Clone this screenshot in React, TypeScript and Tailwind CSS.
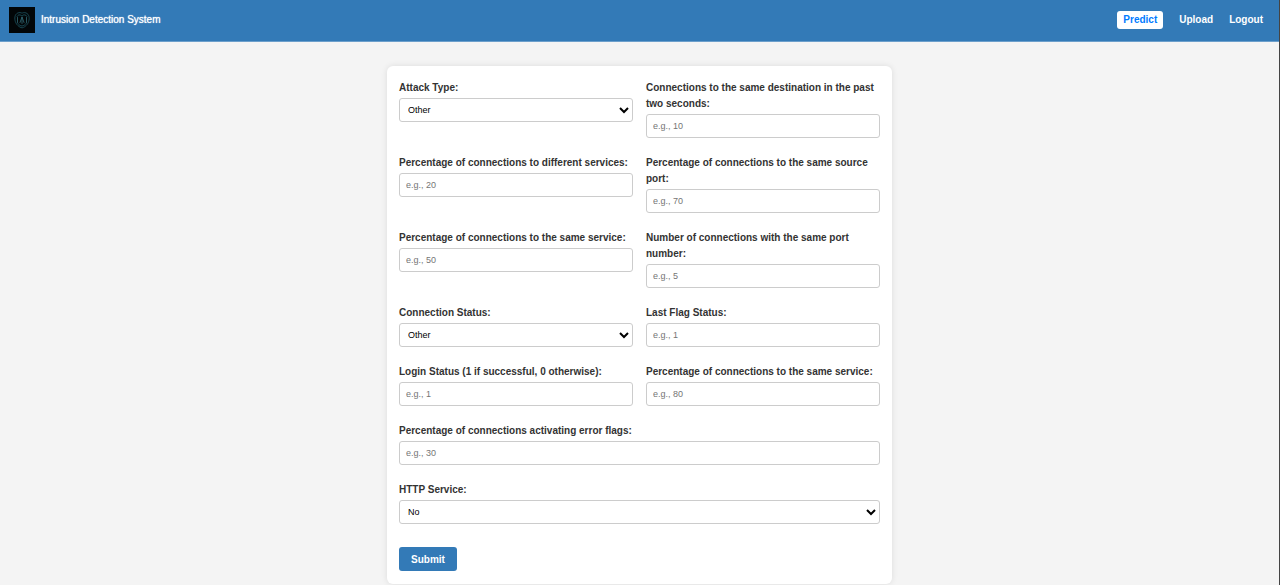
import { useId } from "react";

type FieldProps = {
  label: string;
  placeholder?: string;
  options?: string[];
  wide?: boolean;
};

const fields: FieldProps[] = [
  { label: "Attack Type:", options: ["Other", "neptune", "normal", "satan"] },
  { label: "Connections to the same destination in the past two seconds:", placeholder: "e.g., 10" },
  { label: "Percentage of connections to different services:", placeholder: "e.g., 20" },
  { label: "Percentage of connections to the same source port:", placeholder: "e.g., 70" },
  { label: "Percentage of connections to the same service:", placeholder: "e.g., 50" },
  { label: "Number of connections with the same port number:", placeholder: "e.g., 5" },
  { label: "Connection Status:", options: ["Other", "S0", "SF"] },
  { label: "Last Flag Status:", placeholder: "e.g., 1" },
  { label: "Login Status (1 if successful, 0 otherwise):", placeholder: "e.g., 1" },
  { label: "Percentage of connections to the same service:", placeholder: "e.g., 80" },
  { label: "Percentage of connections activating error flags:", placeholder: "e.g., 30", wide: true },
  { label: "HTTP Service:", options: ["No", "Yes"], wide: true },
];

function Field({ label, placeholder, options, wide }: FieldProps) {
  const id = useId();
  return (
    <div className={wide ? "col-span-2" : ""}>
      <label htmlFor={id} className="mb-0.5 block pt-px text-[10px] leading-4 font-bold text-[#333]">
        {label}
      </label>
      {options ? (
        <select
          id={id}
          className="block h-6 w-full rounded-[3px] border border-[#ccc] bg-white px-1 text-[9px] text-black"
        >
          {options.map((option) => (
            <option key={option}>{option}</option>
          ))}
        </select>
      ) : (
        <input
          id={id}
          type="text"
          placeholder={placeholder}
          className="block h-6 w-full rounded-[3px] border border-[#ccc] bg-white px-1.5 text-[9px] text-black placeholder:text-[#757575]"
        />
      )}
    </div>
  );
}

function Logo() {
  return (
    <svg viewBox="0 0 26 26" className="size-[26px]" aria-hidden="true">
      <rect width="26" height="26" fill="#020608" />
      <g fill="none" stroke="#2b7a8c" strokeWidth="0.8" strokeLinecap="round" opacity="0.7">
        <path d="M13 6.2C10 4.6 6.6 6.4 6 9.6c-.6 3.400.6 7 3 9 1.200 1.200 2.600 2 4 2.200 1.400-.2 2.800-1 4-2.200 2.400-2 3.600-5.600 3-9C19.400 6.400 16 4.600 13 6.200Z" strokeDasharray="1.600 .8" />
        <path d="M8 9.500c1.500-2.300 3.500-2 5-.5 1.500-1.500 3.500-1.800 5 .5" strokeDasharray="2 .7" />
        <path d="M8.500 10.500v5M11 15.500l2-5.500 2 5.500M13 10v6.500M17.500 10.500v5" stroke="#4796a5" />
        <path d="M9 16.500c1 1.500 2.400 2.300 4 2.500 1.600-.2 3-1 4-2.500" />
      </g>
    </svg>
  );
}

export default function App() {
  return (
    <div className="min-h-screen border-r border-[#444] bg-[#f4f4f4] font-['Liberation_Sans',Arial,sans-serif] text-[#333]">
      <header className="flex h-[42px] items-center justify-between border-b border-[#6c9fcb] bg-[#337ab7] pr-4 pb-0.5 pl-[9px] text-[10px] leading-4 font-bold text-white">
        <a href="#home" className="flex items-center gap-1.5 font-normal text-shadow-[0_0_1px_#fff]">
          <Logo />
          Intrusion Detection System
        </a>
        <nav className="flex items-center gap-4">
          <a href="#predict" className="rounded-[3px] bg-white px-1.5 py-px text-[#007bff]">
            Predict
          </a>
          <a href="#upload">Upload</a>
          <a href="#logout">Logout</a>
        </nav>
      </header>
      <main className="pt-6 pb-px">
        <form
          onSubmit={(event) => event.preventDefault()}
          className="mx-auto max-w-[505px] rounded-md bg-white px-3 py-[13px] shadow-[0_0_6px_rgba(0,0,0,0.1)]"
        >
          <div className="grid grid-cols-2 gap-x-[13px] gap-y-4">
            {fields.map((field, index) => (
              <Field key={index} {...field} />
            ))}
          </div>
          <button
            type="submit"
            className="mt-[23px] block h-6 rounded-[3px] bg-[#337ab7] px-3 text-[10px] font-bold text-white"
          >
            Submit
          </button>
        </form>
      </main>
    </div>
  );
}
